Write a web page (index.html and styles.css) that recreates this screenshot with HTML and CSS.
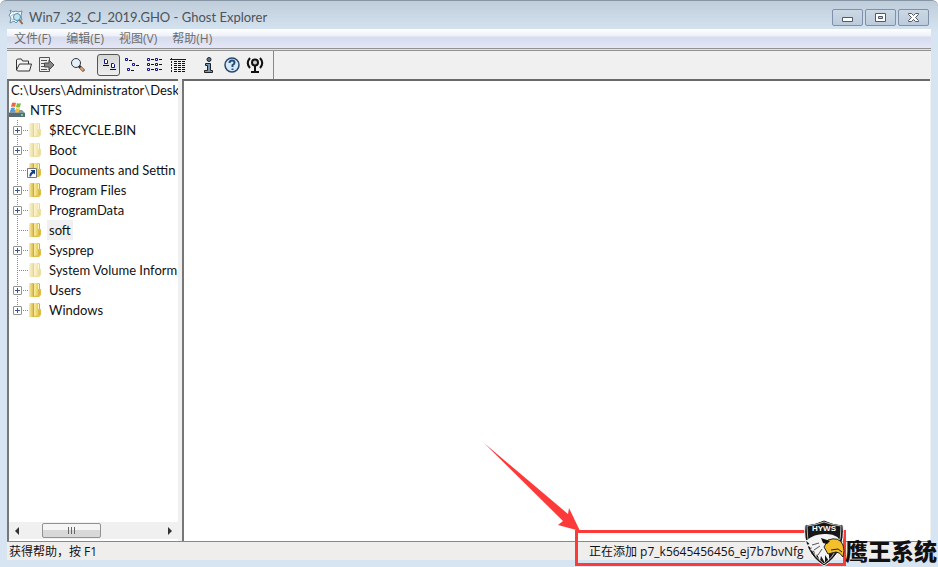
FILE: index.html
```
<!DOCTYPE html>
<html lang="zh-CN">
<head>
<meta charset="utf-8">
<title>Win7_32_CJ_2019.GHO - Ghost Explorer</title>
<link rel="stylesheet" href="styles.css">
</head>
<body>
<svg class="defs" aria-hidden="true">
<defs>
<linearGradient id="gold"><stop offset="0" stop-color="#f9eea0"/><stop offset=".55" stop-color="#ead266"/><stop offset="1" stop-color="#c9a42c"/></linearGradient>
<linearGradient id="shade"><stop offset="0" stop-color="#f8eda9"/><stop offset="1" stop-color="#d5b342"/></linearGradient>
<symbol id="folder" viewBox="0 0 16 16"><path d="M2 2l1-1h4v13l-1 1H2z" fill="url(#shade)"/><path d="M7 1h5l1 1v11l-6 2z" fill="url(#gold)"/><path d="M6.500 2v13" stroke="#c7a940"/><path d="M7 14l5-1V7h2v6l-2 2H5z" fill="#dfc04b"/><path d="M12.500 9v4" stroke="#72c6f5"/><path d="M11.500 2v5" stroke="#fff4b4"/></symbol>
<symbol id="lnk" viewBox="0 0 10 10"><path d="M.5.5h9v9h-9z" fill="#fff" stroke="#777"/><path d="M3.500 2H8v4.500L6.700 5.200Q4.500 6 4 8.500H2.500Q2 5.500 5 3.500z" fill="#123f86"/></symbol>
</defs>
</svg>
<div class="window">
<header class="title">
<svg width="16" height="16" viewBox="0 0 16 16"><path d="M2 1l3 2 3-1 2 1 4-1-1 5 1 4-3 0-3 3-2-2-4 2 1-5-2-3 2-2z" fill="#f5fbff" stroke="#668fab"/><path d="M3 7l3-2M4 11l2-1" stroke="#8cc4df"/><circle cx="9" cy="8" r="3.500" fill="#bce5f6" stroke="#5689a9"/><path d="M11.500 11l3 4" stroke="#946b4f" stroke-width="2"/></svg>
<h1>Win7_32_CJ_2019.GHO - Ghost Explorer</h1>
<div class="controls">
<button aria-label="最小化"><svg width="15" height="13" viewBox="0 0 15 13"><path d="M2.500 6.500h10v4h-10z" fill="#fff" stroke="#53576a"/></svg></button>
<button aria-label="最大化"><svg width="15" height="13" viewBox="0 0 15 13"><path d="M2.500 2.500h10v8h-10z" fill="#fff" stroke="#53576a"/><path d="M5.500 5.500h4v2h-4z" fill="#c3d1df" stroke="#53576a"/></svg></button>
<button aria-label="关闭"><svg width="15" height="13" viewBox="0 0 15 13"><path d="M2.500 2.500h3l2 2 2-2h3v1l-3 3 3 3v1h-3l-2-2-2 2h-3v-1l3-3-3-3z" fill="#fff" stroke="#53576a"/></svg></button>
</div>
</header>
<nav class="menu"><button>文件(F)</button><button>编辑(E)</button><button>视图(V)</button><button>帮助(H)</button></nav>
<div class="bar">
<div class="group">
<button aria-label="打开"><svg width="18" height="16" viewBox="0 0 18 16"><path d="M1.500 13V3l1-1h4l1 2h6v3M1.500 13l3-6h12l-2 7h-12z" fill="#f4f4f4" stroke="#333"/></svg></button>
<button aria-label="提取"><svg width="18" height="16" viewBox="0 0 18 16"><path d="M1.500.5h10v14h-10z" fill="#eee" stroke="#555"/><path d="M3 3.500h6M3 6.500h4M3 9.500h4M3 12.500h6" stroke="#555"/><path d="M6.500 6h4.500V3l5 5-5 5v-3H6.500z" fill="#888" stroke="#444"/></svg></button>
</div>
<div class="group">
<button aria-label="查找"><svg width="18" height="16" viewBox="0 0 18 16"><circle cx="7" cy="6" r="4.500" fill="#e4f1fa" stroke="#333"/><path d="M10 9l5 5" stroke="#333" stroke-width="3"/><path d="M11.500 10.500l3 3" stroke="#e7a56d" stroke-width="2"/></svg></button>
</div>
<div class="group">
<button class="on" aria-label="大图标" aria-pressed="true"><svg width="16" height="16" viewBox="0 0 16 16" fill="#fff" stroke="#10107e"><path d="M3.500 2.500h2l1 1v3h-3zM10.500 6.500h2l1 1v3h-3z"/><path d="M2 8.500h6M9 12.500h6" stroke="#111"/></svg></button>
<button aria-label="小图标"><svg width="18" height="16" viewBox="0 0 18 16" fill="#fff" stroke="#10107e"><path d="M2.500 1.500h2v2h-2zM9.500 6.500h2v2h-2zM4.500 11.500h2v2h-2z"/><path d="M6 3.500h3M13 8.500h3M8 13.500h3" stroke="#111"/></svg></button>
<button aria-label="列表"><svg width="18" height="16" viewBox="0 0 18 16" fill="#fff" stroke="#10107e"><path d="M1.500 1.500h2v2h-2zM9.500 1.500h2v2h-2zM1.500 6.500h2v2h-2zM9.500 6.500h2v2h-2zM1.500 11.500h2v2h-2zM9.500 11.500h2v2h-2z"/><path d="M5 2.500h3M13 2.500h3M5 7.500h3M13 7.500h3M5 12.500h3M13 12.500h3" stroke="#111"/></svg></button>
<button aria-label="详细资料"><svg width="18" height="16" viewBox="0 0 18 16"><path d="M1 2.500h16" stroke="#10107e"/><path d="M2.500 1v14" stroke="#10107e" stroke-dasharray="2 1"/><path d="M5 4.500h12M5 6.500h12M5 8.500h12M5 10.500h12M5 12.500h12M5 14.500h12" stroke="#111" stroke-dasharray="3 1"/></svg></button>
</div>
<div class="group info">
<button aria-label="属性"><svg width="18" height="16" viewBox="0 0 18 16"><circle cx="9" cy="2.500" r="2" fill="#52769d" stroke="#222"/><path d="M5.500 6.500h5v7h2v2h-8v-2h3v-5h-2z" fill="#7797b6" stroke="#222"/></svg></button>
<button aria-label="帮助主题"><svg width="18" height="16" viewBox="0 0 18 16"><circle cx="9" cy="8" r="7" fill="#d7e9f8" stroke="#29486b" stroke-width="1.500"/><path d="M6.500 6q0-2.500 2.500-2.500t2.500 2.300Q11.500 7 9.500 8.200V10" fill="none" stroke="#244e7b" stroke-width="2"/><path d="M8.500 11.500h2v1.500h-2z" fill="#244e7b"/></svg></button>
<button aria-label="在线"><svg width="18" height="16" viewBox="0 0 18 16" fill="none" stroke="#111" stroke-width="2"><path d="M4 1Q-.5 6 4 11M14 1q4.500 5 0 10M9 8v6M5 15h8"/><circle cx="9" cy="5.500" r="3" fill="#ccc"/></svg></button>
</div>
</div>
<main class="panes">
<aside class="side">
<div class="path">C:\Users\Administrator\Desk</div>
<div class="drive"><svg width="16" height="16" viewBox="0 0 16 16"><path d="M2 8h11l3 3v4H0v-4z" fill="#8999a3"/><path d="M0 11h16v4H0z" fill="#536d7b"/><path d="M12 12h2v2h-2z" fill="#63db79"/><path d="M3 1q2-1 4 0L6 5Q4 4 2 5z" fill="#ed6838"/><path d="M8 1q2 1 4 0l-1 4Q9 6 7 5z" fill="#80bd3c"/><path d="M2 6q2-1 4 0l-1 4Q3 9 1 10z" fill="#4c9fde"/><path d="M7 6q2 1 4 0l-1 4q-2 1-4 0z" fill="#f4c438"/></svg>NTFS</div>
<ul class="tree">
<li><button class="plus" aria-label="展开"></button><svg class="icon pale"><use href="#folder"/></svg><span>$RECYCLE.BIN</span></li>
<li><button class="plus" aria-label="展开"></button><svg class="icon pale"><use href="#folder"/></svg><span>Boot</span></li>
<li><i class="leaf"></i><svg class="icon"><use href="#folder"/><use href="#lnk" y="6" width="10" height="10"/></svg><span>Documents and Settin</span></li>
<li><button class="plus" aria-label="展开"></button><svg class="icon"><use href="#folder"/></svg><span>Program Files</span></li>
<li><button class="plus" aria-label="展开"></button><svg class="icon pale"><use href="#folder"/></svg><span>ProgramData</span></li>
<li><i class="leaf"></i><svg class="icon"><use href="#folder"/></svg><span class="picked">soft</span></li>
<li><button class="plus" aria-label="展开"></button><svg class="icon"><use href="#folder"/></svg><span>Sysprep</span></li>
<li><i class="leaf"></i><svg class="icon pale"><use href="#folder"/></svg><span>System Volume Inform</span></li>
<li><button class="plus" aria-label="展开"></button><svg class="icon"><use href="#folder"/></svg><span>Users</span></li>
<li><button class="plus" aria-label="展开"></button><svg class="icon"><use href="#folder"/></svg><span>Windows</span></li>
</ul>
<div class="scroll"><button aria-label="向左"><svg width="16" height="16" viewBox="0 0 16 16"><path d="M10 4v8L6 8z" fill="#333"/></svg></button><div class="track"><div class="thumb"></div></div><button aria-label="向右"><svg width="16" height="16" viewBox="0 0 16 16"><path d="M6 4v8l4-4z" fill="#333"/></svg></button></div>
</aside>
<section class="content" aria-label="文件列表"></section>
</main>
<footer class="status"><span>获得帮助，按 F1</span><span class="adding">正在添加 p7_k5645456456_ej7b7bvNfg</span></footer>
</div>
<svg class="arrow" width="100" height="90" viewBox="0 0 100 90"><path d="M3 2L87 73l1-6 11 23-22-6 5-4z" fill="#fc3a3a"/></svg>
<div class="callout"></div>
<div class="brand">
<svg width="42" height="48" viewBox="0 0 42 48"><path d="M21 1Q29 5 40 6q3 27-19 41Q-1 33 2 6 13 5 21 1z" fill="#171717" stroke="#fff"/><path d="M21 3q8 3 17 4 1 25-17 38Q3 32 4 7q9-1 17-4z" fill="none" stroke="#bbb"/><text x="21" y="12" text-anchor="middle">HYWS</text><path d="M4 21Q12 14 24 15q12 0 15 11l-9 3-4 5 0 8-4-6 0 8-4-7-1 5-3-7-1 3-2-6-4-1 2-2-6-3 4-1-5-4 4 0z" fill="#f4f4f4"/><path d="M25 21q11-4 15 5 2 5 0 12-3-5-7-5l-8 2-4-7z" fill="#f3bf2b" stroke="#222"/><path d="M28 31l7-1 4 3" fill="none" stroke="#222"/><path d="M18 19l9 3-3 3-4-1z" fill="#111"/><path d="M9 26l7-2M11 31l6-4M15 36l4-6" stroke="#555"/></svg>
<strong>鹰王系统</strong>
</div>
</body>
</html>
```
FILE: styles.css
```
* { box-sizing: border-box; }
body { margin: 0; min-height: 100vh; position: relative; overflow: hidden; font: 13px/20px Lato, "Noto Sans CJK SC", sans-serif; color: #111; }
button { margin: 0; padding: 0; border: 0; background: none; font: inherit; color: inherit; }
svg { flex: none; display: block; }
.defs { position: absolute; width: 0; height: 0; }
.window { height: 100vh; display: flex; flex-direction: column; padding: 0 7px 7px; border-top: 1px solid #8796a5; border-radius: 6px 6px 0 0; background: linear-gradient(#bfcddb, #d7e4f1 32px); }
.title { height: 28px; flex: none; display: flex; align-items: center; gap: 5px; padding: 4px 2px 0 1px; color: #4c535b; }
.title h1 { margin: 0; font-size: 13px; font-weight: 400; }
.controls { display: flex; gap: 2px; margin-left: auto; align-self: flex-start; padding-top: 4px; }
.controls button { width: 31px; height: 17px; display: grid; place-items: center; border: 1px solid #8090a9; border-radius: 2px; background: linear-gradient(#cbd8e5, #bccbdb); }
.menu { height: 19px; flex: none; display: flex; gap: 15px; padding: 0 7px; background: linear-gradient(#fff, #edf0f8 7px, #d7dcee 8px, #e3e7f6); font: 12px/19px "Open Sans", "Noto Sans CJK SC", sans-serif; color: #6d6d6d; }
.bar { height: 31px; flex: none; display: flex; align-items: center; gap: 8px; padding: 0 5px; border-top: 3px double #929292; background: linear-gradient(90deg, #f0f0f0 266px, #888 266px 267px, #f0f0f0 267px) padding-box; }
.group { display: flex; }
.group button { width: 23px; height: 22px; display: grid; place-items: center; }
.group .on { border: 1px solid #555; border-radius: 3px; background: linear-gradient(#d7d7d7, #eee); }
.panes { flex: 1; min-height: 0; display: grid; grid-template-columns: 171px 1fr; gap: 4px; background: #f0f0f0; padding-right: 1px; }
.side, .content { min-width: 0; background: #fff; border-top: 2px solid #696969; border-left: 2px solid #777; }
.side { display: flex; flex-direction: column; overflow: hidden; white-space: nowrap; padding-bottom: 2px; }
.path { height: 19px; line-height: 19px; padding-left: 2px; }
.drive { display: flex; align-items: center; gap: 5px; }
.tree { margin: 0; padding: 0 0 0 4px; list-style: none; flex: 1; background: repeating-linear-gradient(#888 0 1px, transparent 1px 2px) 8px 0 / 1px 190px no-repeat; }
.tree li { display: flex; align-items: center; height: 20px; background: repeating-linear-gradient(90deg, #888 0 1px, transparent 1px 2px) 4px 10px / 12px 1px no-repeat; }
.plus { width: 9px; height: 9px; flex: none; margin-right: 5px; border: 1px solid #929292; border-radius: 1px; background: linear-gradient(#35558b, #35558b) center / 5px 1px no-repeat, linear-gradient(#35558b, #35558b) center / 1px 5px no-repeat, #fff; }
.leaf { width: 14px; flex: none; }
.icon { width: 16px; height: 16px; }
.pale { opacity: .5; }
.tree span { padding: 0 2px; margin-left: 4px; }
.tree .picked { background: #f0f0f0; }
.scroll { height: 17px; flex: none; display: flex; background: #f0f0f0; }
.track { flex: 1; padding: 1px 0 1px 17px; }
.thumb { width: 59px; height: 15px; border: 1px solid #929292; border-radius: 2px; background: repeating-linear-gradient(90deg, #666 0 1px, transparent 1px 3px) center / 8px 7px no-repeat, linear-gradient(#f5f5f5 50%, #d8d8d8 50%); }
.status { height: 19px; flex: none; display: flex; padding-left: 2px; border-top: 1px solid #888; background: #f0eded; font: 12px/19px "Open Sans", "Noto Sans CJK SC", sans-serif; white-space: nowrap; }
.adding { position: absolute; left: 589px; }
.arrow { position: absolute; left: 481px; bottom: 36px; }
.callout { position: absolute; left: 575px; right: 92px; bottom: 1px; height: 36px; border: 3px solid #fc3a3a; }
.brand { position: absolute; right: 1px; bottom: 0; display: flex; align-items: center; }
.brand text { font: bold 8px "Liberation Sans", sans-serif; fill: #fff; }
.brand strong { font: 900 23px/28px "Noto Sans CJK SC", sans-serif; margin-top: 14px; }
```
